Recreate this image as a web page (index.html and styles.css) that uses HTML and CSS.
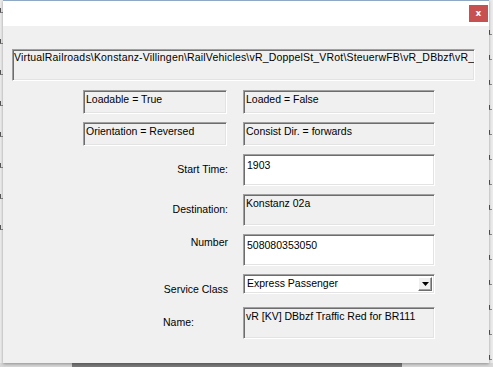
FILE: index.html
```html
<!DOCTYPE html>
<html>
<head>
<meta charset="utf-8">
<link rel="stylesheet" href="styles.css">
</head>
<body>
<div class="desktop">
  <div class="bg-left">
    <span class="mark"></span><span class="mark"></span><span class="mark"></span><span class="mark"></span><span class="mark"></span><span class="mark"></span><span class="mark"></span><span class="mark"></span>
  </div>
  <div class="bg-right">
    <span class="mark"></span><span class="mark"></span><span class="mark"></span><span class="mark"></span><span class="mark"></span><span class="mark"></span><span class="mark"></span><span class="mark"></span><span class="mark"></span><span class="mark"></span><span class="mark"></span><span class="mark"></span><span class="mark"></span><span class="mark"></span>
  </div>
  <div class="bg-bottom"><div class="bg-bar"></div></div>

  <div class="dialog">
    <div class="titlebar">
      <div class="close-btn">x</div>
    </div>
    <div class="content">
      <div class="box static path">VirtualRailroads\Konstanz-Villingen\RailVehicles\vR_DoppelSt_VRot\SteuerwFB\vR_DBbzf\vR_</div>
      <div class="form">
        <div class="box static colA">Loadable = True</div>
        <div class="box static colB">Loaded = False</div>

        <div class="box static colA">Orientation = Reversed</div>
        <div class="box static colB">Consist Dir. = forwards</div>

        <div class="label colA">Start Time:</div>
        <div class="box edit colB">1903</div>

        <div class="label colA">Destination:</div>
        <div class="box static colB">Konstanz 02a</div>

        <div class="label colA top">Number</div>
        <div class="box edit colB">508080353050</div>

        <div class="label colA">Service Class</div>
        <div class="combo colB">
          <span class="combo-text">Express Passenger</span>
          <span class="combo-btn"><svg width="7" height="4" viewBox="0 0 7 4"><path d="M0 0H7L3.5 4Z" fill="#000"/></svg></span>
        </div>

        <div class="label colA left">Name:</div>
        <div class="box static colB">vR [KV] DBbzf Traffic Red for BR111</div>
      </div>
    </div>
  </div>
</div>
</body>
</html>
```
FILE: styles.css
```css
html, body {
  margin: 0;
  padding: 0;
}
body {
  width: 493px;
  height: 367px;
  overflow: hidden;
  background: #e6e6e6;
  font-family: "Liberation Sans", Arial, sans-serif;
  font-size: 10.5px;
  color: #000;
}
.desktop {
  position: relative;
  width: 493px;
  height: 367px;
  overflow: hidden;
}
.bg-left {
  position: absolute;
  left: 0;
  top: 0;
  width: 3px;
  height: 367px;
  background: #ececec;
  display: flex;
  flex-direction: column;
  padding-top: 8px;
  box-sizing: border-box;
  gap: 26px;
  overflow: hidden;
}
.bg-right {
  position: absolute;
  left: 489px;
  top: 0;
  width: 4px;
  height: 367px;
  background: #ececec;
  display: flex;
  flex-direction: column;
  padding-top: 30px;
  box-sizing: border-box;
  gap: 20px;
  overflow: hidden;
}
.mark {
  display: block;
  flex: none;
  width: 3px;
  height: 5px;
  border-bottom: 1px solid #8a8a8a;
  border-left: 1px solid #555;
  box-sizing: border-box;
}
.bg-bottom {
  position: absolute;
  left: 0;
  top: 363px;
  width: 493px;
  height: 4px;
  background: #d8d8d8;
}
.bg-bar {
  margin-left: 72px;
  width: 330px;
  height: 4px;
  background: #7a7a7a;
}
.dialog {
  position: absolute;
  left: 3px;
  top: 0;
  width: 486px;
  height: 363px;
  background: #f0f0f0;
  box-shadow: 0 1px 3px rgba(0, 0, 0, 0.35);
  display: flex;
  flex-direction: column;
}
.titlebar {
  flex: none;
  height: 25px;
  background: #ffffff;
  border-top: 1px solid #8fa8c4;
  display: flex;
  justify-content: flex-end;
  align-items: flex-start;
  padding-right: 1px;
}
.close-btn {
  flex: none;
  display: block;
  margin-top: 4px;
  width: 19px;
  height: 17px;
  background-color: #c75050;
  color: #ffffff;
  font-family: "DejaVu Sans", sans-serif;
  font-weight: bold;
  font-size: 9px;
  line-height: 16px;
  text-align: center;
}
.content {
  padding: 23px 14px 0 9px;
}
.box {
  box-sizing: border-box;
  border: 1px solid;
  border-color: #a0a0a0 #ffffff #ffffff #a0a0a0;
  box-shadow: inset 1px 1px 0 #6d6d6d, inset -1px -1px 0 #e3e3e3;
  line-height: 12px;
  white-space: nowrap;
  overflow: hidden;
}
.static {
  background: #f0f0f0;
  padding: 2px 2px 0 2px;
}
.edit {
  background: #ffffff;
  padding: 4px 3px 0 3px;
}
.path {
  width: 463px;
  height: 32px;
  padding: 1px 1px 0 1px;
  margin-bottom: 9px;
  letter-spacing: 0.18px;
}
.form {
  display: grid;
  grid-template-columns: 55px 144px 192px;
  grid-template-rows: 24px 24px 32px 32px 32px 25px 32px;
  column-gap: 16px;
  row-gap: 8px;
}
.colA { grid-column: 2; }
.colB { grid-column: 3; }
.label {
  text-align: right;
  line-height: 12px;
  padding-top: 9px;
  margin-right: -1px;
}
.label.top { padding-top: 2px; }
.label.left {
  text-align: left;
  padding-left: 80px;
  padding-top: 9px;
}
.combo {
  box-sizing: border-box;
  height: 20px;
  align-self: start;
  background: #ffffff;
  border: 1px solid;
  border-color: #a0a0a0 #ffffff #ffffff #a0a0a0;
  box-shadow: inset 1px 1px 0 #6d6d6d, inset -1px -1px 0 #e3e3e3;
  display: flex;
  align-items: stretch;
  padding: 2px 2px 2px 3px;
}
.combo-text {
  flex: 1;
  line-height: 14px;
  margin-top: -1px;
}
.combo-btn {
  width: 14px;
  box-sizing: border-box;
  background: #f0f0f0;
  border: 1px solid;
  border-color: #ffffff #6d6d6d #6d6d6d #ffffff;
  box-shadow: inset -1px -1px 0 #a0a0a0;
  display: flex;
  align-items: center;
  justify-content: center;
}
```
